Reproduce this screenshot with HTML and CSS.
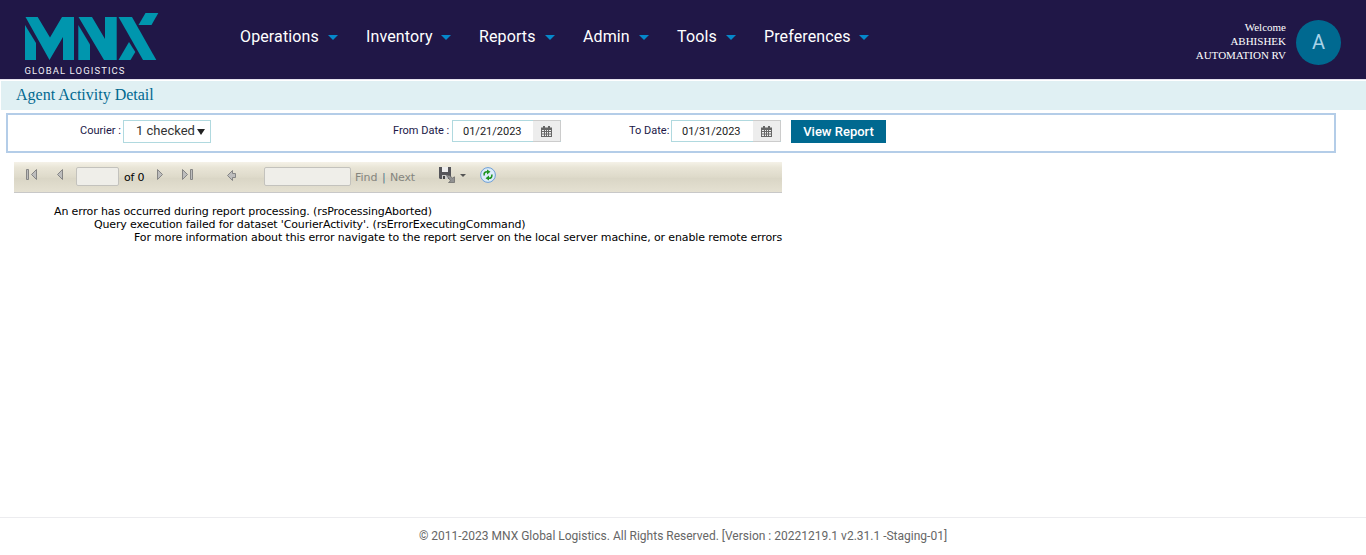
FILE: index.html
```html
<!DOCTYPE html>
<html lang="en">
<head>
<meta charset="utf-8">
<title>Agent Activity Detail</title>
<link rel="stylesheet" href="styles.css">
</head>
<body>
<header class="header">
  <svg class="logo" width="136" height="64" viewBox="24 12 136 64" role="img" aria-label="MNX Global Logistics">
    <g fill="#0096ae">
      <path d="M25.500 17H37.700L50 37.500L62 17H74V60H63V37L49.500 60Z"/>
      <path d="M25 25L36 43V60H25Z"/>
      <path d="M78.500 17H92L105 39V17H116.700V60H104Z"/>
      <path d="M78.300 25L90 44.500V60H78.300Z"/>
      <path d="M118.500 17H132L156.300 60H143Z"/>
      <path d="M145.500 13H158.300L151.500 25H138.500Z"/>
      <path d="M129 42L135.300 52L130.500 60H118.500Z"/>
    </g>
    <text class="logo-text" x="24.5" y="73.5" textLength="100">GLOBAL LOGISTICS</text>
  </svg>
  <nav class="nav">
    <a class="nav-item operations">Operations<i class="caret"></i></a>
    <a class="nav-item inventory">Inventory<i class="caret"></i></a>
    <a class="nav-item reports">Reports<i class="caret"></i></a>
    <a class="nav-item admin">Admin<i class="caret"></i></a>
    <a class="nav-item tools">Tools<i class="caret"></i></a>
    <a class="nav-item preferences">Preferences<i class="caret"></i></a>
  </nav>
  <div class="welcome">Welcome<br>ABHISHEK<br>AUTOMATION RV</div>
  <div class="avatar">A</div>
</header>
<h1 class="title">Agent Activity Detail</h1>
<section class="filters">
  <label class="label courier-label">Courier :</label>
  <div class="select"><span>1 checked</span><i class="select-arrow"></i></div>
  <label class="label from-label">From Date :</label>
  <div class="date from-date"><span class="date-value">01/21/2023</span><span class="date-button">
    <svg width="11" height="11" viewBox="0 0 11 11"><path fill="#666" d="M0 1.500H2V0H4V1.500H7V0H9V1.500H11V11H0Z"/><path fill="#eee" d="M1 4H3V5H1ZM4 4H5V5H4ZM6 4H7V5H6ZM8 4H10V5H8ZM1 6H3V7.500H1ZM4 6H5V7.500H4ZM6 6H7V7.500H6ZM8 6H10V7.500H8ZM1 8.500H3V10H1ZM4 8.500H5V10H4ZM6 8.500H7V10H6ZM8 8.500H10V10H8Z"/></svg></span></div>
  <label class="label to-label">To Date:</label>
  <div class="date to-date"><span class="date-value">01/31/2023</span><span class="date-button">
    <svg width="11" height="11" viewBox="0 0 11 11"><path fill="#666" d="M0 1.500H2V0H4V1.500H7V0H9V1.500H11V11H0Z"/><path fill="#eee" d="M1 4H3V5H1ZM4 4H5V5H4ZM6 4H7V5H6ZM8 4H10V5H8ZM1 6H3V7.500H1ZM4 6H5V7.500H4ZM6 6H7V7.500H6ZM8 6H10V7.500H8ZM1 8.500H3V10H1ZM4 8.500H5V10H4ZM6 8.500H7V10H6ZM8 8.500H10V10H8Z"/></svg></span></div>
  <button class="view">View Report</button>
</section>
<main class="report">
  <div class="toolbar">
    <svg class="first" width="12" height="12" viewBox="0 0 12 12"><g class="tool-shape"><path d="M.5 .5H2.500V10.500H.5Z"/><path d="M10.500 .5V10.500L5.500 5.500Z"/></g></svg>
    <svg class="prev" width="7" height="12" viewBox="0 0 7 12"><path class="tool-shape" d="M5.500 .5V10.500L.5 5.500Z"/></svg>
    <span class="box page-box"></span>
    <span class="of">of 0</span>
    <svg class="next" width="7" height="12" viewBox="0 0 7 12"><path class="tool-shape" d="M.5 .5V10.500L5.500 5.500Z"/></svg>
    <svg class="last" width="12" height="12" viewBox="0 0 12 12"><g class="tool-shape"><path d="M.5 .5V10.500L5.500 5.500Z"/><path d="M8.500 .5H10.500V10.500H8.500Z"/></g></svg>
    <svg class="back" width="10" height="11" viewBox="0 0 10 11"><path class="tool-shape" d="M.5 5.500L5.500 .5V3.500H8.500V7.500H5.500V10.500Z"/></svg>
    <span class="box find-box"></span>
    <span class="find">Find</span><span class="bar">|</span><span class="find-next">Next</span>
    <svg class="export" width="17" height="16" viewBox="0 0 17 16"><path fill="#55555a" d="M0 0H12V12H1L0 11Z"/><path fill="#eee" d="M3 0H9V5H3Z"/><path fill="#ccc" d="M3 8H9V12H3Z"/><path fill="#444" d="M4 9H6V12H4Z"/><path fill="#929292" stroke="#666" stroke-width=".7" d="M7.500 8.500H10.500L13.500 11L15.500 9.800V15.500H9.500L11.500 13.800Z"/></svg>
    <i class="tool-caret"></i>
    <svg class="refresh" width="16" height="16" viewBox="0 0 16 16"><circle cx="8" cy="8" r="7.400" fill="#dcebfa" stroke="#6c9ed5"/><path fill="none" stroke="#209520" stroke-width="1.600" d="M4.300 8.500C3.500 6 5 4.600 7.500 4.700M11.700 7.500C12.500 10 11 11.400 8.500 11.300"/><path fill="#209520" d="M7 2.500L10.500 4.800L7 7.500ZM9 8.500L5.500 11.200L9 13.500Z"/></svg>
  </div>
  <div class="errors">
    <div class="error one">An error has occurred during report processing. (rsProcessingAborted)</div>
    <div class="error two">Query execution failed for dataset 'CourierActivity'. (rsErrorExecutingCommand)</div>
    <div class="error three">For more information about this error navigate to the report server on the local server machine, or enable remote errors</div>
  </div>
</main>
<footer class="footer">© 2011-2023 MNX Global Logistics. All Rights Reserved. [Version : 20221219.1 v2.31.1 -Staging-01]</footer>
</body>
</html>
```
FILE: styles.css
```css
* { box-sizing: border-box; }
body { margin: 0; height: 555px; overflow: hidden; display: flex; flex-direction: column; background: #fff; font-family: Roboto, sans-serif; }
svg { display: block; flex: none; }
.header { height: 80px; flex: none; display: flex; background: #201747; border-bottom: 1px solid #e6e3ef; }
.logo { margin: 12px 0 0 24px; }
.logo-text { font: 400 9.5px Roboto, sans-serif; fill: #f0eef5; }
.nav { display: flex; width: 720px; margin-left: 80px; height: 73px; align-items: center; }
.nav-item { display: flex; justify-content: space-between; align-items: center; flex: none; color: #fff; font-size: 16px; font-weight: 400; letter-spacing: .12px; line-height: 20px; white-space: nowrap; }
.operations { width: 98px; margin-right: 28px; }
.inventory { width: 85px; margin-right: 28px; }
.reports { width: 76px; margin-right: 28px; }
.admin { width: 66px; margin-right: 28px; }
.tools { width: 59px; margin-right: 28px; }
.preferences { width: 105px; }
.caret { border: 5px solid transparent; border-top-color: #0588cb; border-bottom: 0; margin-top: 2px; }
.welcome { margin: 20px 10px 0 auto; text-align: right; color: #fff; font: 11px/14px "Liberation Serif", serif; white-space: nowrap; }
.avatar { width: 45px; height: 45px; margin: 20px 25px 0 0; border-radius: 50%; background: #006990; color: #a9d3e8; font-size: 20px; line-height: 45px; text-align: center; }
.title { flex: none; height: 29px; margin: 1px 0 0 1px; padding-left: 15px; background: #e0f0f3; color: #006990; font: 16px/28px "Liberation Serif", serif; }
.filters { flex: none; display: flex; width: 1330px; height: 40px; margin: 3px 0 0 6px; border: 2px solid #b4cde8; padding-top: 5px; }
.label { flex: none; color: #201747; font-size: 11px; line-height: 21px; white-space: nowrap; }
.courier-label { width: 43px; margin-left: 72px; }
.select { display: flex; justify-content: space-between; align-items: center; width: 88px; height: 23px; border: 1px solid #b0d9df; padding: 0 5px 0 12px; color: #333; font-size: 13px; line-height: 20px; white-space: nowrap; }
.select span { margin-top: -2px; }
.select-arrow { border: 4px solid transparent; border-top: 6px solid #222; border-bottom: 0; margin-top: 1px; }
.from-label { width: 59px; margin-left: 182px; }
.date { display: flex; height: 22px; border: 1px solid #b0d9df; border-right-color: #ccc; }
.from-date { width: 109px; }
.to-date { width: 110px; }
.date-value { flex: 1; padding-left: 10px; color: #222; font-size: 11px; line-height: 21px; }
.date-button { display: flex; align-items: center; justify-content: center; width: 27px; height: 22px; margin: -1px 0; background: #ededed; border: solid #ccc; border-width: 1px 0; }
.to-label { width: 42px; margin-left: 68px; }
.view { width: 95px; height: 23px; margin-left: 10px; padding: 0 0 1px; border: 0; background: #006990; color: #fff; font: 500 13px/21px Roboto, sans-serif; }
.report { flex: 1; padding: 9px 0 0 14px; }
.toolbar { display: flex; width: 768px; height: 31px; border-bottom: 1px solid #c8c8c8; background: linear-gradient(#f5f2e8 0, #e9e5d7 18%, #dedaca 50%, #dad6c6 55%, #e5e1d2 100%); font: 11px/13px "DejaVu Sans", Verdana, sans-serif; }
.toolbar > * { flex: none; }
.tool-shape { fill: #bdbdbd; stroke: #858585; stroke-width: 1; }
.first { margin: 7px 0 0 12px; }
.prev { margin: 7px 0 0 19px; }
.box { height: 19px; background: #efeee9; border: 1px solid #c3c2bd; border-radius: 2px; margin-top: 5px; }
.page-box { width: 43px; margin-left: 12px; }
.of { width: 21px; margin: 9px 0 0 5px; white-space: nowrap; letter-spacing: -.2px; }
.next { margin: 7px 0 0 12px; }
.last { margin: 7px 0 0 18px; }
.back { margin: 8px 0 0 33px; }
.find-box { width: 87px; margin-left: 27px; }
.find, .find-next, .bar { margin-top: 9px; color: #85857e; }
.find { width: 24px; margin-left: 4px; }
.bar { width: 4px; margin-left: 3px; color: #55778c; }
.find-next { width: 25px; margin-left: 4px; letter-spacing: -.15px; }
.export { margin: 5px 0 0 24px; }
.tool-caret { height: 3px; border: 3px solid transparent; border-top-color: #555; border-bottom: 0; margin: 12px 0 0 4px; }
.refresh { margin: 5px 0 0 14px; }
.errors { margin-top: 12px; color: #000; font: 11px/13px "DejaVu Sans", Verdana, sans-serif; letter-spacing: -.125px; white-space: nowrap; }
.one { margin-left: 40px; }
.two { margin-left: 80px; letter-spacing: -.14px; }
.three { margin-left: 120px; }
.footer { flex: none; height: 38px; border-top: 1px solid #ececef; color: #666; font-size: 12px; line-height: 36px; text-align: center; }
```
